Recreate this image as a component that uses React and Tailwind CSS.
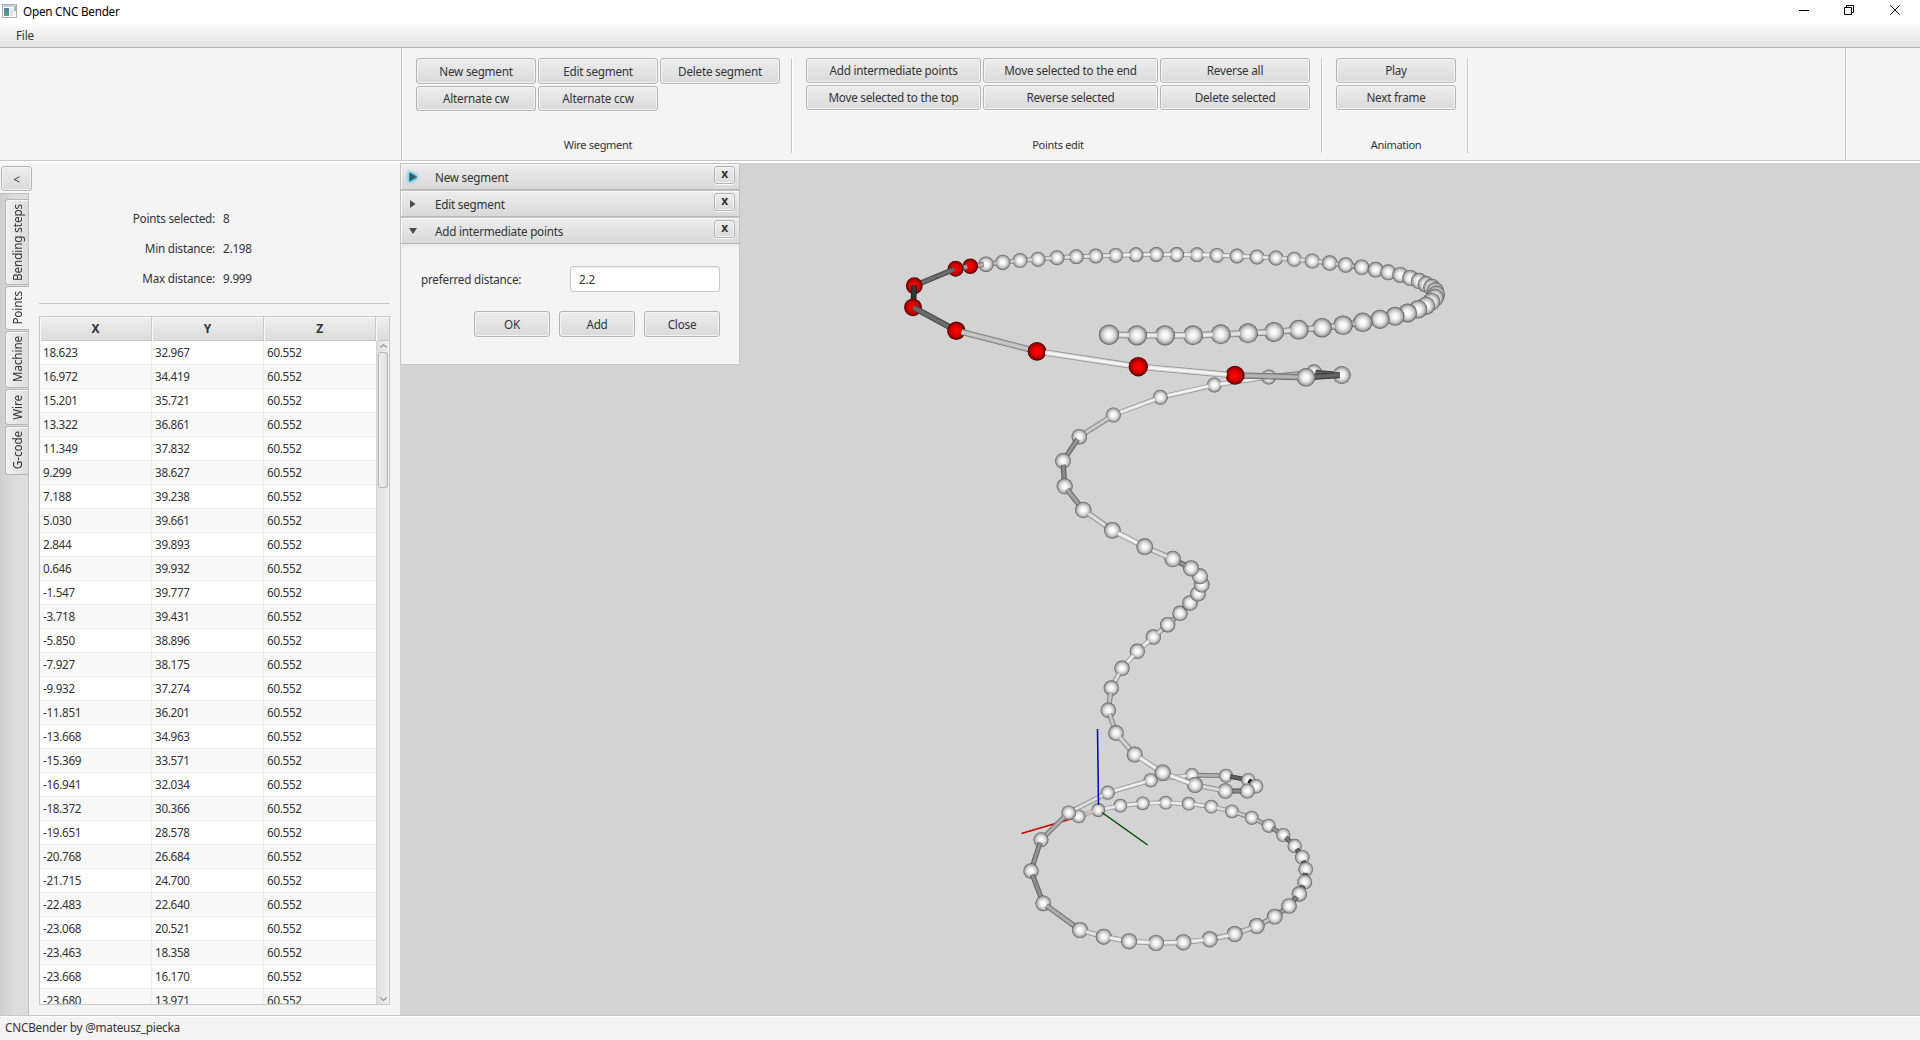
import React from "react";

const ROWS = [
  ["18.623", "32.967"], ["16.972", "34.419"], ["15.201", "35.721"], ["13.322", "36.861"],
  ["11.349", "37.832"], ["9.299", "38.627"], ["7.188", "39.238"], ["5.030", "39.661"],
  ["2.844", "39.893"], ["0.646", "39.932"], ["-1.547", "39.777"], ["-3.718", "39.431"],
  ["-5.850", "38.896"], ["-7.927", "38.175"], ["-9.932", "37.274"], ["-11.851", "36.201"],
  ["-13.668", "34.963"], ["-15.369", "33.571"], ["-16.941", "32.034"], ["-18.372", "30.366"],
  ["-19.651", "28.578"], ["-20.768", "26.684"], ["-21.715", "24.700"], ["-22.483", "22.640"],
  ["-23.068", "20.521"], ["-23.463", "18.358"], ["-23.668", "16.170"], ["-23.680", "13.971"],
];

// Wire points: x, y, radius, depth, shade of the rod to the next point, rod inset at the far end.
const WIRE = [
  // upper ring
  [1109, 334.7, 10.2, 200, 235], [1137, 335.3, 10.1, 199, 235], [1165, 335.3, 10.1, 198, 235],
  [1193, 335.3, 10, 197, 235], [1220.7, 334.3, 10, 196, 230], [1248, 333.3, 10, 195, 225],
  [1274, 332, 10, 194, 220], [1298.7, 329.7, 9.9, 193, 215], [1322, 327.7, 9.8, 192, 205],
  [1343, 325.3, 9.8, 191, 190], [1362.7, 322.3, 9.7, 190, 170], [1380, 319.3, 9.6, 189, 150],
  [1395, 316.3, 9.5, 188, 120], [1407.7, 313, 9.4, 187, 90], [1418, 309.3, 9.3, 186, 80],
  [1426, 305.7, 9.2, 185, 70], [1431.3, 301.7, 9, 184, 70], [1435, 297.7, 8.9, 183, 70],
  [1436.3, 294.3, 8.7, 182, 70], [1435.3, 290.7, 8.6, 181, 70], [1431.7, 287.3, 8.5, 180, 70],
  [1426, 284.3, 8.3, 179, 80], [1419, 281, 8.2, 178, 90], [1410.3, 278, 8.1, 177, 100],
  [1400.3, 275, 8, 176, 120], [1388.3, 272.3, 8, 175, 140], [1375.7, 269.7, 7.9, 174, 160],
  [1361.7, 267.3, 7.8, 173, 185], [1345.7, 265, 7.7, 172, 200], [1329.7, 263, 7.7, 171, 215],
  [1312.3, 261, 7.6, 170, 220], [1294.3, 259.3, 7.5, 169, 230], [1276, 258, 7.5, 168, 235],
  [1257, 257, 7.5, 167, 240], [1237, 256, 7.4, 166, 240], [1217, 255.3, 7.4, 165, 240],
  [1197, 254.7, 7.4, 164, 240], [1176.7, 254.5, 7.4, 165, 240], [1156.3, 254.5, 7.4, 166, 240],
  [1136, 254.7, 7.4, 167, 240], [1115.7, 255.3, 7.4, 168, 235], [1095.7, 256, 7.4, 169, 230],
  [1076.3, 256.7, 7.4, 170, 225], [1057, 257.7, 7.5, 171, 220], [1038, 259.2, 7.5, 172, 215],
  [1020, 260.5, 7.5, 173, 205], [1002.7, 262.3, 7.6, 174, 195], [986, 264.2, 7.7, 175, 180, 0.3],
  [970.3, 266.3, 7.8, 176, 160, 0.4], [955.7, 268.7, 8, 177, 110, 0.2],
  [914.3, 285.7, 8.4, 178, 55, 0], [913, 307.3, 8.9, 179, 110, 0.1],
  [956.3, 330.7, 9.2, 180, 200, 0.6], [1037, 351.3, 9.4, 181, 245, 0.9],
  [1138.3, 366.7, 9.7, 182, 245, 0.9], [1235, 375.3, 9.5, 181, 180, 0.9],
  // helix
  [1306, 377.3, 9.3, 180, 100, 0.2], [1341.7, 375, 9, 150, 95, 0.2], [1314, 372.3, 8, 110, 190, 0.8],
  [1268.7, 377, 7.5, 105, 240], [1214.3, 385, 7.5, 104, 245], [1160.3, 397.3, 7.5, 105, 240],
  [1113.3, 415, 7.6, 106, 205], [1079.3, 436.7, 7.8, 107, 150, 0.4], [1063, 461, 7.9, 108, 140, 0.5],
  [1064.7, 486.3, 8.1, 109, 165, 0.5], [1083.3, 510, 8.3, 110, 225], [1112.3, 530.3, 8.4, 111, 245],
  [1144.7, 546.7, 8.4, 112, 225], [1172.7, 559, 8.3, 111, 145], [1191, 568.3, 8.1, 110, 100],
  [1200, 576.3, 8, 109, 80], [1201.7, 584.7, 7.9, 108, 80], [1198, 593.7, 7.8, 107, 90],
  [1190, 603, 7.8, 106, 120], [1180, 613.3, 7.7, 105, 180], [1167.7, 624.7, 7.7, 104, 220],
  [1153.3, 637, 7.7, 103, 240], [1137.3, 651.3, 7.7, 104, 240], [1122, 668.3, 7.7, 105, 220],
  [1111.3, 688, 7.7, 106, 200, 0.6], [1108.3, 710.3, 7.8, 107, 200, 0.5],
  [1116, 733, 7.9, 108, 215, 0.7], [1134.7, 754.5, 8, 109, 240], [1162.7, 772.7, 8.2, 110, 245],
  [1195, 785, 8, 109, 220], [1225.3, 791, 7.8, 108, 135], [1247.3, 791, 7.6, 106, 60, 0.6],
  [1256, 786.3, 7.3, 90, 38, 0.1], [1248.3, 780, 7.1, 60, 95, 0.6], [1226, 775.7, 7, 55, 180, 0.8],
  [1192, 775, 7, 54, 230], [1150.7, 780.3, 7.1, 55, 240], [1107.7, 792.7, 7.1, 56, 225],
  [1068.7, 812.7, 7.3, 57, 175], [1041, 839.7, 7.5, 58, 150, 0.4], [1031, 871, 7.7, 59, 145, 0.5],
  // lower ring
  [1043.3, 903.3, 7.9, 60, 175, 0.5], [1080, 930, 8.1, 61, 230], [1103.7, 936.7, 8, 62, 240],
  [1129, 941.3, 8.1, 63, 240], [1156, 943, 8.1, 62, 240], [1183.3, 942.3, 8.1, 61, 240],
  [1209.7, 939.3, 8.1, 60, 235], [1234.7, 934, 8, 59, 220], [1256.7, 926, 8, 58, 195],
  [1274.7, 916.7, 7.9, 57, 160], [1289, 906, 7.8, 56, 130, 0.5], [1299.3, 894, 7.7, 55, 105, 0.5],
  [1304.7, 882, 7.5, 54, 90, 0.5], [1305.7, 869.3, 7.4, 53, 90, 0.5], [1302.3, 857.3, 7.3, 52, 100, 0.5],
  [1294.7, 846, 7.2, 51, 120, 0.5], [1283.3, 835, 7.1, 50, 150, 0.6], [1268.7, 825.7, 7, 49, 180],
  [1251.7, 817.7, 7, 48, 205], [1232, 811.3, 6.9, 47, 225], [1211.3, 806.7, 6.9, 46, 235],
  [1188.7, 803.7, 6.9, 45, 240], [1165.7, 802.7, 6.9, 44, 240], [1142.7, 803.3, 6.9, 45, 240],
  [1120.3, 805.7, 6.9, 46, 235], [1098.3, 810, 6.9, 47, 235], [1078.7, 816.3, 6.9, 48, 0],
];
const RED_FROM = 48;
const RED_TO = 55;

function gray(v) {
  const n = Math.round(v);
  return `rgb(${n},${n},${n})`;
}

function Rod({ a, b }) {
  const far = a[3] <= b[3] ? a : b;
  const near = far === a ? b : a;
  const dx = near[0] - far[0];
  const dy = near[1] - far[1];
  const len = Math.hypot(dx, dy) || 1;
  const k = Math.min(far[2] * (a[5] ?? 0.8), len);
  const x1 = far[0] + (dx / len) * k;
  const y1 = far[1] + (dy / len) * k;
  const w = ((a[2] + b[2]) / 2) * 0.66;
  const s = a[4];
  const line = { x1, y1, x2: near[0], y2: near[1] };
  return (
    <g>
      <line {...line} stroke={gray(s * 0.6)} strokeWidth={w} />
      <line {...line} stroke={gray(s * 0.87)} strokeWidth={w * 0.74} />
      <line {...line} stroke={gray(s)} strokeWidth={w * 0.42} />
    </g>
  );
}

function Scene() {
  const items = [];
  WIRE.forEach((p, i) => {
    const red = i >= RED_FROM && i <= RED_TO;
    items.push({
      z: p[3],
      el: <circle key={"p" + i} cx={p[0]} cy={p[1]} r={p[2]} fill={red ? "url(#ballRed)" : "url(#ball)"} />,
    });
    const n = WIRE[i + 1];
    if (n) items.push({ z: (p[3] + n[3]) / 2, el: <Rod key={"r" + i} a={p} b={n} /> });
  });
  items.sort((m, n) => m.z - n.z);
  return (
    <svg className="block h-[852px] w-[1520px]" viewBox="400 163 1520 852">
      <defs>
        <radialGradient id="ball">
          <stop offset="0" stopColor="#ffffff" />
          <stop offset="0.3" stopColor="#f5f5f5" />
          <stop offset="0.6" stopColor="#d4d4d4" />
          <stop offset="0.82" stopColor="#a6a6a6" />
          <stop offset="0.94" stopColor="#747474" />
          <stop offset="1" stopColor="#505050" />
        </radialGradient>
        <radialGradient id="ballRed">
          <stop offset="0" stopColor="#ff0808" />
          <stop offset="0.3" stopColor="#f20000" />
          <stop offset="0.6" stopColor="#cf0000" />
          <stop offset="0.85" stopColor="#8c0000" />
          <stop offset="1" stopColor="#480000" />
        </radialGradient>
      </defs>
      <line x1="1021.5" y1="833.5" x2="1098" y2="811" stroke="#c80000" strokeWidth="1.5" />
      {items.map((m) => m.el)}
      <line x1="1085" y1="814.3" x2="1093" y2="812" stroke="#e08080" strokeWidth="1" />
      <line x1="1097.5" y1="729" x2="1098.5" y2="805" stroke="#0000c0" strokeWidth="1.5" />
      <line x1="1102" y1="812.5" x2="1147.7" y2="845" stroke="#004c00" strokeWidth="1.5" />
    </svg>
  );
}

function Btn({ children, className }) {
  return (
    <div
      className={
        "flex items-center justify-center rounded-[3px] border border-[#b5b5b5] bg-linear-to-b from-[#ededed] to-[#dadada] shadow-[inset_0_0_0_1px_#f3f3f3,0_1px_0_#fafafa] whitespace-nowrap " +
        className
      }
    >
      {children}
    </div>
  );
}

function Group({ label, children, className }) {
  return (
    <div className={"flex h-[95px] flex-col justify-between " + className}>
      {children}
      <div className="text-center text-[11px] leading-[16px] tracking-[-0.3px]">{label}</div>
    </div>
  );
}

function VLine() {
  return <div className="h-[95px] w-[2px] border-l border-[#c8c8c8] bg-white" />;
}

function Toolbar() {
  return (
    <div className="flex h-[115px] border-b-2 border-white">
      <div className="flex w-full border-b border-[#c8c8c8]">
        <div className="w-[401px]" />
        <div className="flex w-[1444px] border-l border-[#c8c8c8] pt-[10px] shadow-[inset_1px_0_0_#fff]">
          <Group label="Wire segment" className="ml-[14px] w-[364px]">
            <div className="grid grid-cols-[120px_120px_120px] gap-x-[2px] gap-y-[2px]">
              <Btn className="h-[26px]">New segment</Btn>
              <Btn className="h-[26px]">Edit segment</Btn>
              <Btn className="h-[26px]">Delete segment</Btn>
              <Btn className="h-[25px] pb-px">Alternate cw</Btn>
              <Btn className="h-[25px] pb-px">Alternate ccw</Btn>
            </div>
          </Group>
          <div className="ml-[11px]"><VLine /></div>
          <Group label="Points edit" className="ml-[13px] w-[504px]">
            <div className="grid grid-cols-[175px_175px_150px] gap-[2px]">
              <Btn className="h-[25px] pb-px">Add intermediate points</Btn>
              <Btn className="h-[25px] pb-px">Move selected to the end</Btn>
              <Btn className="h-[25px] pb-px">Reverse all</Btn>
              <Btn className="h-[25px] pb-px">Move selected to the top</Btn>
              <Btn className="h-[25px] pb-px">Reverse selected</Btn>
              <Btn className="h-[25px] pb-px">Delete selected</Btn>
            </div>
          </Group>
          <div className="ml-[11px]"><VLine /></div>
          <Group label="Animation" className="ml-[13px] w-[120px]">
            <div className="flex flex-col gap-[2px]">
              <Btn className="h-[25px] pb-px">Play</Btn>
              <Btn className="h-[25px] pb-px">Next frame</Btn>
            </div>
          </Group>
          <div className="ml-[11px]"><VLine /></div>
        </div>
        <div className="w-[75px] border-l border-[#c8c8c8] shadow-[inset_1px_0_0_#fff]" />
      </div>
    </div>
  );
}

function Tab({ children, className, active }) {
  return (
    <div
      className={
        "ml-[5px] flex items-center justify-center rounded-l-[3px] border border-r-0 border-[#b5b5b5] " +
        (active ? "w-[24px] bg-[#f4f4f4] " : "w-[23px] bg-linear-to-r from-[#f0f0f0] to-[#dcdcdc] shadow-[inset_1px_1px_0_#f8f8f8] ") +
        className
      }
    >
      <span className="rotate-180 pl-px whitespace-nowrap [writing-mode:vertical-rl] text-[11.7px] leading-[16px] tracking-[-0.1px]">{children}</span>
    </div>
  );
}

function Stat({ label, value }) {
  return (
    <div className="flex h-[30px] items-center">
      <div className="w-[186px] text-right">{label}</div>
      <div className="ml-[8px]">{value}</div>
    </div>
  );
}

function Table() {
  return (
    <div className="flex h-[689px] w-[351px] flex-col overflow-hidden border border-[#c8c8c8] bg-white">
      <div className="grid h-[24px] flex-none grid-cols-[112px_112px_112px_13px] border-b border-[#c8c8c8] bg-linear-to-b from-[#efefef] to-[#dcdcdc] text-center text-[12px] leading-[24px] font-bold">
        <div className="border-r border-[#c8c8c8] shadow-[inset_1px_1px_0_#fafafa]">X</div>
        <div className="border-r border-[#c8c8c8] shadow-[inset_1px_1px_0_#fafafa]">Y</div>
        <div className="border-r border-[#c8c8c8] shadow-[inset_1px_1px_0_#fafafa]">Z</div>
        <div className="shadow-[inset_1px_1px_0_#fafafa]" />
      </div>
      <div className="flex min-h-0 flex-1">
        <div className="w-[336px] tracking-[-0.3px]">
          {ROWS.map((r, i) => (
            <div
              key={i}
              className={
                "grid h-[24px] grid-cols-[112px_112px_112px] border-b border-[#ededed] leading-[23px] " +
                (i % 2 ? "bg-[#f9f9f9]" : "bg-white")
              }
            >
              <div className="border-r border-[#ededed] pl-[3px]">{r[0]}</div>
              <div className="border-r border-[#ededed] pl-[3px]">{r[1]}</div>
              <div className="pl-[3px]">60.552</div>
            </div>
          ))}
        </div>
        <div className="flex w-[13px] flex-col items-center border-l border-[#d5d5d5] bg-linear-to-r from-[#dedede] to-[#f0f0f0]">
          <svg className="mt-[2px] h-[8px] w-[9px] flex-none" viewBox="0 0 9 8" fill="none" stroke="#949494" strokeWidth="1.3">
            <path d="M1.2 4.6 L4.5 1.8 L7.8 4.6" />
          </svg>
          <div className="mt-px h-[136px] w-[10px] flex-none rounded-[3px] border border-[#b5b5b5] bg-linear-to-r from-[#f2f2f2] to-[#dedede]" />
          <svg className="mt-auto mb-px h-[8px] w-[9px] flex-none" viewBox="0 0 9 8" fill="none" stroke="#949494" strokeWidth="1.3">
            <path d="M1.2 2.6 L4.5 5.4 L7.8 2.6" />
          </svg>
        </div>
      </div>
    </div>
  );
}

function PaneTitle({ children, open, focused }) {
  return (
    <div className="flex h-[27px] items-center border border-[#c2c2c2] border-b-[#b8b8b8] bg-linear-to-b from-[#ededed] to-[#d9d9d9] shadow-[inset_1px_1px_0_#f8f8f8]">
      <svg className={"ml-[4px] h-[14px] w-[16px] " + (focused ? "drop-shadow-[0_0_2px_#039ed3]" : "")} viewBox="0 0 16 14">
        {open ? (
          <path d="M4 4 H12 L8 10 Z" fill="#4d4d4d" />
        ) : focused ? (
          <path d="M4.5 2.5 V11.5 L12 7 Z" fill="#3f5560" stroke="#039ed3" strokeWidth="0.8" />
        ) : (
          <path d="M5 3 V11 L10.5 7 Z" fill="#4d4d4d" />
        )}
      </svg>
      <span className="ml-[14px]">{children}</span>
      <Btn className="mr-[4px] mb-[3px] ml-auto h-[18px] w-[21px] text-[12px] font-bold">
        <span className="pb-[2px]">x</span>
      </Btn>
    </div>
  );
}

export default function App() {
  return (
    <div className="flex h-[1040px] w-[1920px] flex-col overflow-hidden bg-[#f4f4f4] font-['Noto_Sans',sans-serif] text-[11.7px] leading-[16px] tracking-[-0.22px] text-[#333333]">
      <div className="flex h-[23px] flex-none items-center bg-white text-black">
        <svg className="mb-[2px] ml-[2px] h-[14px] w-[15px]" viewBox="0 0 15 14">
          <defs>
            <linearGradient id="appIcon" x1="0" y1="0" x2="0" y2="1">
              <stop offset="0" stopColor="#4a7fa5" />
              <stop offset="1" stopColor="#5aa57a" />
            </linearGradient>
          </defs>
          <rect x="0.5" y="0.5" width="14" height="13" fill="#fff" stroke="#a9adb3" />
          <rect x="1" y="1" width="13" height="2" fill="#c9ccd2" />
          <rect x="2" y="4" width="5" height="8" fill="url(#appIcon)" />
          <rect x="8" y="4" width="3" height="8" fill="#e4e7ec" />
          <rect x="12" y="3" width="2" height="4" fill="#8cc5b4" />
        </svg>
        <span className="ml-[6px] pb-px text-[11.7px]">Open CNC Bender</span>
        <svg className="mb-[3px] ml-auto h-[14px] w-[104px]" viewBox="1798 4 104 14" fill="none" stroke="#000" strokeWidth="1">
          <path d="M1799 11.5 H1809" />
          <path d="M1844.5 8.5 H1851.5 V15.5 H1844.5 Z M1846.5 8.5 V6.5 H1853.5 V13.5 H1851.5" />
          <path d="M1890.3 6.3 L1899.7 15.7 M1899.7 6.3 L1890.3 15.7" />
        </svg>
        <div className="w-[18px]" />
      </div>
      <div className="flex h-[25px] flex-none items-center border-b border-[#b3b3b3] bg-linear-to-b from-[#fdfdfd] to-[#e3e3e3] pl-[16px]">
        File
      </div>
      <Toolbar />
      <div className="flex h-[852px] flex-none">
        <div className="flex w-[400px] flex-none">
          <div className="flex w-[29px] flex-none flex-col">
            <div className="h-[30px] pt-[3px] pl-px">
              <Btn className="h-[25px] w-[31px]">&lt;</Btn>
            </div>
            <div className="flex flex-1 flex-col gap-px border-t border-r border-[#c0c0c0] bg-linear-to-r from-[#cecece] via-[#dcdcdc] to-[#dddddd] pt-[5px]">
              <Tab className="h-[86px]">Bending steps</Tab>
              <Tab active className="h-[44px]">Points</Tab>
              <Tab className="h-[57px]">Machine</Tab>
              <Tab className="h-[36px]">Wire</Tab>
              <Tab className="h-[49px]">G-code</Tab>
            </div>
          </div>
          <div className="flex flex-1 flex-col pt-[40px] pl-[10px]">
            <div className="-ml-[10px]">
              <Stat label="Points selected:" value="8" />
              <Stat label="Min distance:" value="2.198" />
              <Stat label="Max distance:" value="9.999" />
            </div>
            <div className="mt-[10px] mb-[12px] h-px w-[351px] bg-[#c8c8c8]" />
            <Table />
          </div>
        </div>
        <div className="relative w-[1520px] bg-[#d3d3d3]">
          <Scene />
          <div className="absolute top-0 left-0 w-[340px]">
            <PaneTitle focused>New segment</PaneTitle>
            <PaneTitle>Edit segment</PaneTitle>
            <PaneTitle open>Add intermediate points</PaneTitle>
            <div className="h-[121px] border border-t-0 border-[#c8c8c8] bg-linear-to-b from-[#e9e9e9] to-[#f4f4f4] to-[6px] pt-[22px] pr-[19px] pl-[20px]">
              <div className="flex items-center justify-between">
                <span>preferred distance:</span>
                <div className="flex h-[26px] w-[150px] items-center rounded-[3px] border border-[#c8c8c8] bg-white pl-[8px] shadow-[inset_0_1px_1px_#ececec]">2.2</div>
              </div>
              <div className="mt-[19px] flex justify-end gap-[9px]">
                <Btn className="h-[26px] w-[76px]">OK</Btn>
                <Btn className="h-[26px] w-[76px]">Add</Btn>
                <Btn className="h-[26px] w-[76px]">Close</Btn>
              </div>
            </div>
          </div>
        </div>
      </div>
      <div className="flex flex-1 items-center border-t border-[#c8c8c8] pl-[5px] shadow-[inset_0_1px_0_#fff]">
        <span className="pb-[2px] text-[11.8px] tracking-[-0.25px]">CNCBender by @mateusz_piecka</span>
      </div>
    </div>
  );
}
